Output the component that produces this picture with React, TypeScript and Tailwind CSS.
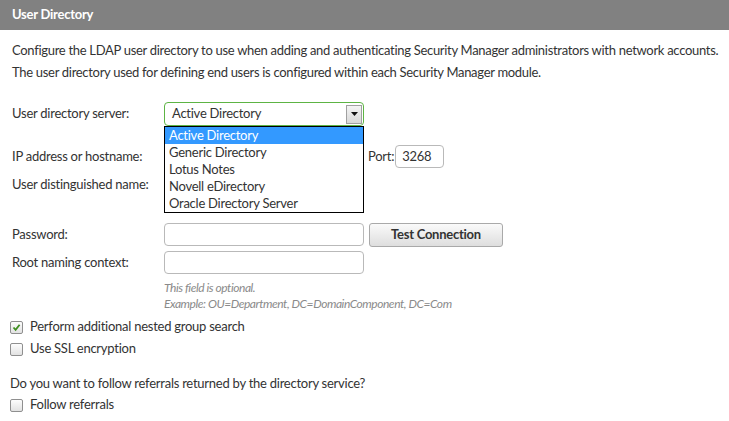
import { useState } from 'react'

const options = ['Active Directory', 'Generic Directory', 'Lotus Notes', 'Novell eDirectory', 'Oracle Directory Server']

function Checkbox({ checked, label }: { checked?: boolean; label: string }) {
  return (
    <label className="flex items-center h-[22px]">
      <span className="ml-[10px] mr-[7px] w-[13px] h-[13px] border border-[#8f8f8f] rounded-[2px] bg-gradient-to-b from-[#fdfdfd] to-[#e2e2e2] flex items-center justify-center">
        {checked && (
          <svg width="9" height="9" viewBox="0 0 9 9">
            <path d="M1.5 4.5 L3.6 6.8 L7.6 1.8" fill="none" stroke="#3f8f1f" strokeWidth="1.8" />
          </svg>
        )}
      </span>
      <span>{label}</span>
    </label>
  )
}

function Field({ className = '' }: { className?: string }) {
  return <div className={`h-[23px] border border-[#b9b9b9] rounded-[4px] bg-white ${className}`} />
}

export default function App() {
  const [selected] = useState(0)

  return (
    <div className="w-[729px] h-[421px] bg-white text-[13px] tracking-[-0.25px] text-[#333] font-['Lato','Noto_Sans',sans-serif] overflow-hidden">
      {/* Header */}
      <div className="h-[30px] bg-[#818181] flex items-center px-[12px]">
        <h1 className="text-white font-bold text-[13px]">User Directory</h1>
      </div>

      <div className="pt-[9px] px-[12px] leading-[22px] whitespace-nowrap tracking-[-0.3px]">
        <p>Configure the LDAP user directory to use when adding and authenticating Security Manager administrators with network accounts.</p>
        <p>The user directory used for defining end users is configured within each Security Manager module.</p>
      </div>

      {/* Form */}
      <div className="mt-[19px] pl-[12px]">
        <div className="flex items-center h-[24px]">
          <span className="w-[152px]">User directory server:</span>
          <div className="relative w-[200px]">
            <div className="h-[24px] border border-[#5db444] rounded-[4px] bg-white flex items-center pl-[7px] pr-[1px]">
              <span className="flex-1">{options[selected]}</span>
              <span className="w-[16px] h-[19px] border border-[#a0a0a0] bg-gradient-to-b from-[#f4f4f4] to-[#d8d8d8] flex items-center justify-center">
                <svg width="7" height="4" viewBox="0 0 7 4">
                  <path d="M0 0 L7 0 L3.5 4 Z" fill="#111" />
                </svg>
              </span>
            </div>
            <ul className="absolute z-10 left-0 top-[24px] w-[200px] border border-black bg-white leading-[17px]">
              {options.map((o, i) => (
                <li key={o} className={`pl-[4px] ${i === selected ? 'bg-[#3399ff] text-white' : ''}`}>{o}</li>
              ))}
            </ul>
          </div>
        </div>

        <div className="flex items-center h-[23px] mt-[19px]">
          <span className="w-[152px]">IP address or hostname:</span>
          <Field className="w-[200px]" />
          <span className="ml-[4px] mr-[1px]">Port:</span>
          <div className="h-[23px] w-[49px] border border-[#b9b9b9] rounded-[4px] flex items-center pl-[6px]">3268</div>
        </div>

        <div className="flex items-center h-[23px] mt-[5px]">
          <span className="w-[152px]">User distinguished name:</span>
          <Field className="w-[200px]" />
        </div>
        <div className="h-[27px]" />

        <div className="flex items-center h-[23px]">
          <span className="w-[152px]">Password:</span>
          <Field className="w-[200px]" />
          <button className="ml-[5px] w-[134px] h-[24px] border border-[#a9a9a9] rounded-[3px] bg-gradient-to-b from-[#fafafa] to-[#dedede] font-bold text-[#333]">
            Test Connection
          </button>
        </div>

        <div className="flex items-center h-[23px] mt-[5px]">
          <span className="w-[152px]">Root naming context:</span>
          <Field className="w-[200px]" />
        </div>
        <div className="pl-[152px] mt-[6px] italic text-[12px] tracking-[-0.45px] text-[#8a8a8a] leading-[16px]">
          <p>This field is optional.</p>
          <p>Example: OU=Department, DC=DomainComponent, DC=Com</p>
        </div>
      </div>

      <div className="mt-[4px]">
        <Checkbox checked label="Perform additional nested group search" />
        <Checkbox label="Use SSL encryption" />
      </div>

      <p className="mt-[12px] px-[10px] leading-[22px]">Do you want to follow referrals returned by the directory service?</p>
      <Checkbox label="Follow referrals" />
    </div>
  )
}
